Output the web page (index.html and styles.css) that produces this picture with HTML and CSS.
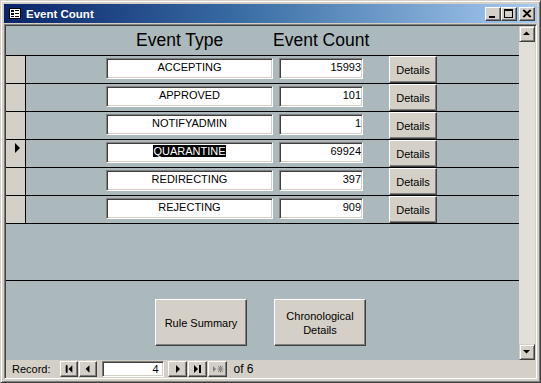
FILE: index.html
```html
<!DOCTYPE html>
<html>
<head>
<meta charset="utf-8">
<link rel="stylesheet" href="styles.css">
</head>
<body>
<div class="window">
  <div class="titlebar">
    <svg class="app-icon" width="12" height="11" viewBox="0 0 12 11">
      <rect x="0.5" y="0.5" width="11" height="10" fill="#fff" stroke="#000"/>
      <rect x="2" y="2" width="3" height="2" fill="#000"/>
      <rect x="6" y="2" width="4" height="1" fill="#000"/>
      <rect x="2" y="5" width="3" height="2" fill="#000"/>
      <rect x="6" y="5" width="4" height="1" fill="#000"/>
      <rect x="2" y="8" width="3" height="1" fill="#000"/>
      <rect x="6" y="8" width="4" height="1" fill="#000"/>
    </svg>
    <span class="title">Event Count</span>
    <div class="caption-buttons">
      <div class="cbtn"><svg width="16" height="14" viewBox="0 0 16 14"><rect x="4" y="9" width="6" height="2" fill="#000"/></svg></div>
      <div class="cbtn"><svg width="16" height="14" viewBox="0 0 16 14"><rect x="3.5" y="2.5" width="8" height="8" fill="none" stroke="#000"/><rect x="3" y="2" width="9" height="2" fill="#000"/></svg></div>
      <div class="cbtn close"><svg width="16" height="14" viewBox="0 0 16 14"><path d="M4 3 L11 10 M5 3 L12 10 M11 3 L4 10 M12 3 L5 10" stroke="#000" stroke-width="1.1"/></svg></div>
    </div>
  </div>
  <div class="client">
    <div class="main">
      <div class="form">
        <div class="form-header">
          <span class="hdr hdr-type">Event Type</span>
          <span class="hdr">Event Count</span>
        </div>
        <div class="row">
          <div class="selector"></div>
          <div class="field type-field">ACCEPTING</div>
          <div class="field count-field">15993</div>
          <div class="btn details">Details</div>
        </div>
        <div class="row">
          <div class="selector"></div>
          <div class="field type-field">APPROVED</div>
          <div class="field count-field">101</div>
          <div class="btn details">Details</div>
        </div>
        <div class="row">
          <div class="selector"></div>
          <div class="field type-field">NOTIFYADMIN</div>
          <div class="field count-field">1</div>
          <div class="btn details">Details</div>
        </div>
        <div class="row">
          <div class="selector current"><svg width="6" height="10" viewBox="0 0 6 10"><path d="M0 0 L5 5 L0 10 Z" fill="#000"/></svg></div>
          <div class="field type-field"><span class="selected">QUARANTINE</span></div>
          <div class="field count-field">69924</div>
          <div class="btn details">Details</div>
        </div>
        <div class="row">
          <div class="selector"></div>
          <div class="field type-field">REDIRECTING</div>
          <div class="field count-field">397</div>
          <div class="btn details">Details</div>
        </div>
        <div class="row">
          <div class="selector"></div>
          <div class="field type-field">REJECTING</div>
          <div class="field count-field">909</div>
          <div class="btn details">Details</div>
        </div>
        <div class="blank"></div>
        <div class="form-footer">
          <div class="btn big">Rule Summary</div>
          <div class="btn big">Chronological<br>Details</div>
        </div>
      </div>
      <div class="vscroll">
        <div class="sbtn"><svg width="16" height="16" viewBox="0 0 16 16"><path d="M4 9 L11 9 L7.5 5.5 Z" fill="#000"/></svg></div>
        <div class="track"></div>
        <div class="sbtn"><svg width="16" height="16" viewBox="0 0 16 16"><path d="M4 6 L11 6 L7.5 9.5 Z" fill="#000"/></svg></div>
      </div>
    </div>
    <div class="navbar">
      <span class="nav-label">Record:</span>
      <div class="nbtn"><svg width="17" height="14" viewBox="0 0 17 14"><rect x="5" y="3" width="2" height="8" fill="#000"/><path d="M12 3 L8 7 L12 11 Z" fill="#000"/></svg></div>
      <div class="nbtn"><svg width="17" height="14" viewBox="0 0 17 14"><path d="M10 3 L6 7 L10 11 Z" fill="#000"/></svg></div>
      <div class="nav-box">4</div>
      <div class="nbtn wide"><svg width="17" height="14" viewBox="0 0 17 14"><path d="M7 3 L11 7 L7 11 Z" fill="#000"/></svg></div>
      <div class="nbtn wide"><svg width="17" height="14" viewBox="0 0 17 14"><path d="M5 3 L9 7 L5 11 Z" fill="#000"/><rect x="10" y="3" width="2" height="8" fill="#000"/></svg></div>
      <div class="nbtn wide"><svg width="17" height="14" viewBox="0 0 17 14"><path d="M4 4 L7 7 L4 10 Z" fill="#808080"/><path d="M9 4 L14 10 M14 4 L9 10 M11.5 3.5 L11.5 10.5 M8.5 7 L14.5 7" stroke="#808080" stroke-width="1"/></svg></div>
      <span class="nav-of">of 6</span>
    </div>
  </div>
</div>
</body>
</html>
```
FILE: styles.css
```css
html, body {
  margin: 0;
  padding: 0;
  background: #d4d0c8;
}
.window {
  width: 541px;
  height: 383px;
  box-sizing: border-box;
  border: 1px solid;
  border-color: #d4d0c8 #404040 #404040 #d4d0c8;
  box-shadow: inset 1px 1px 0 #fff, inset -1px -1px 0 #808080;
  padding: 3px;
  background: #d4d0c8;
  display: flex;
  flex-direction: column;
  font-family: "Liberation Sans", Arial, sans-serif;
}
.titlebar {
  height: 19px;
  flex: none;
  margin-bottom: 1px;
  background: linear-gradient(to right, #0a246a 0%, #3a6ea5 45%, #a6caf0 100%);
  display: flex;
  align-items: center;
  padding-left: 5px;
  padding-right: 2px;
}
.app-icon {
  display: block;
  flex: none;
}
.title {
  color: #fff;
  font-weight: bold;
  font-size: 11.5px;
  margin-left: 5px;
  flex: 1;
}
.caption-buttons {
  display: flex;
}
.cbtn {
  width: 16px;
  height: 14px;
  box-sizing: border-box;
  background: #d4d0c8;
  border: 1px solid;
  border-color: #fff #404040 #404040 #fff;
  box-shadow: inset -1px -1px 0 #808080;
}
.cbtn svg {
  display: block;
  margin: -1px;
}
.cbtn.close {
  margin-left: 2px;
}
.client {
  flex: 1;
  min-height: 0;
  border: 1px solid;
  border-color: #808080 #fff #fff #808080;
  box-shadow: inset 1px 1px 0 #404040, inset -1px -1px 0 #d4d0c8;
  padding: 1px;
  display: flex;
  flex-direction: column;
  background: #d4d0c8;
}
.main {
  height: 334px;
  flex: none;
  display: flex;
}
.form {
  flex: 1;
  background: #abb9bd;
  display: flex;
  flex-direction: column;
  font-size: 11px;
}
.form-header {
  height: 29px;
  border-bottom: 1px solid #000;
  display: flex;
  align-items: center;
  padding-left: 130px;
  font-size: 17.5px;
}
.hdr-type {
  width: 137px;
}
.row {
  height: 27px;
  border-bottom: 1px solid #000;
  display: flex;
  align-items: flex-start;
}
.selector {
  width: 19px;
  height: 27px;
  background: #d4d0c8;
  border-right: 1px solid #000;
  flex: none;
}
.selector.current svg {
  display: block;
  margin: 3px 0 0 9px;
}
.field {
  height: 21px;
  margin-top: 2px;
  box-sizing: border-box;
  background: #fff;
  border: 1px solid;
  border-color: #808080 #fff #fff #808080;
  box-shadow: inset 1px 1px 0 #404040, inset -1px -1px 0 #d4d0c8;
  padding: 1px 2px 0;
  line-height: 14px;
  white-space: nowrap;
}
.type-field {
  width: 167px;
  margin-left: 80px;
  text-align: center;
}
.count-field {
  width: 84px;
  margin-left: 6px;
  text-align: right;
  padding-right: 1px;
}
.selected {
  background: #000;
  color: #fff;
}
.btn {
  background: #d4d0c8;
  box-sizing: border-box;
  border: 1px solid;
  border-color: #fff #404040 #404040 #fff;
  box-shadow: inset -1px -1px 0 #808080;
  display: flex;
  align-items: center;
  justify-content: center;
  text-align: center;
  line-height: 14px;
}
.details {
  width: 48px;
  height: 27px;
  margin-left: 26px;
}
.blank {
  flex: 1;
}
.form-footer {
  height: 79px;
  border-top: 1px solid #000;
  display: flex;
  align-items: flex-start;
  padding-left: 149px;
  gap: 27px;
}
.big {
  width: 92px;
  height: 47px;
  margin-top: 18px;
  font-size: 11px;
}
.vscroll {
  width: 16px;
  flex: none;
  display: flex;
  flex-direction: column;
  background: #e2dfda;
}
.sbtn {
  width: 16px;
  height: 16px;
  box-sizing: border-box;
  background: #d4d0c8;
  border: 1px solid;
  border-color: #d4d0c8 #404040 #404040 #d4d0c8;
  box-shadow: inset 1px 1px 0 #fff, inset -1px -1px 0 #808080;
  flex: none;
}
.sbtn svg {
  display: block;
  margin: -1px;
}
.track {
  flex: 1;
}
.navbar {
  flex: 1;
  display: flex;
  align-items: center;
  font-size: 11px;
  padding-left: 6px;
}
.nav-label {
  margin-right: 9px;
}
.nbtn {
  width: 18px;
  height: 16px;
  box-sizing: border-box;
  background: #d4d0c8;
  border: 1px solid;
  border-color: #fff #404040 #404040 #fff;
  box-shadow: inset -1px -1px 0 #808080;
  margin-right: 1px;
  display: flex;
  align-items: center;
  justify-content: center;
}
.nbtn.wide {
  width: 19px;
}
.nbtn svg {
  display: block;
}
.nav-box {
  width: 62px;
  height: 16px;
  box-sizing: border-box;
  background: #fff;
  border: 1px solid;
  border-color: #808080 #fff #fff #808080;
  box-shadow: inset 1px 1px 0 #404040, inset -1px -1px 0 #d4d0c8;
  text-align: right;
  padding: 0 4px;
  line-height: 14px;
  margin-left: 4px;
  margin-right: 4px;
}
.nav-of {
  margin-left: 6px;
  font-size: 12px;
}
```
